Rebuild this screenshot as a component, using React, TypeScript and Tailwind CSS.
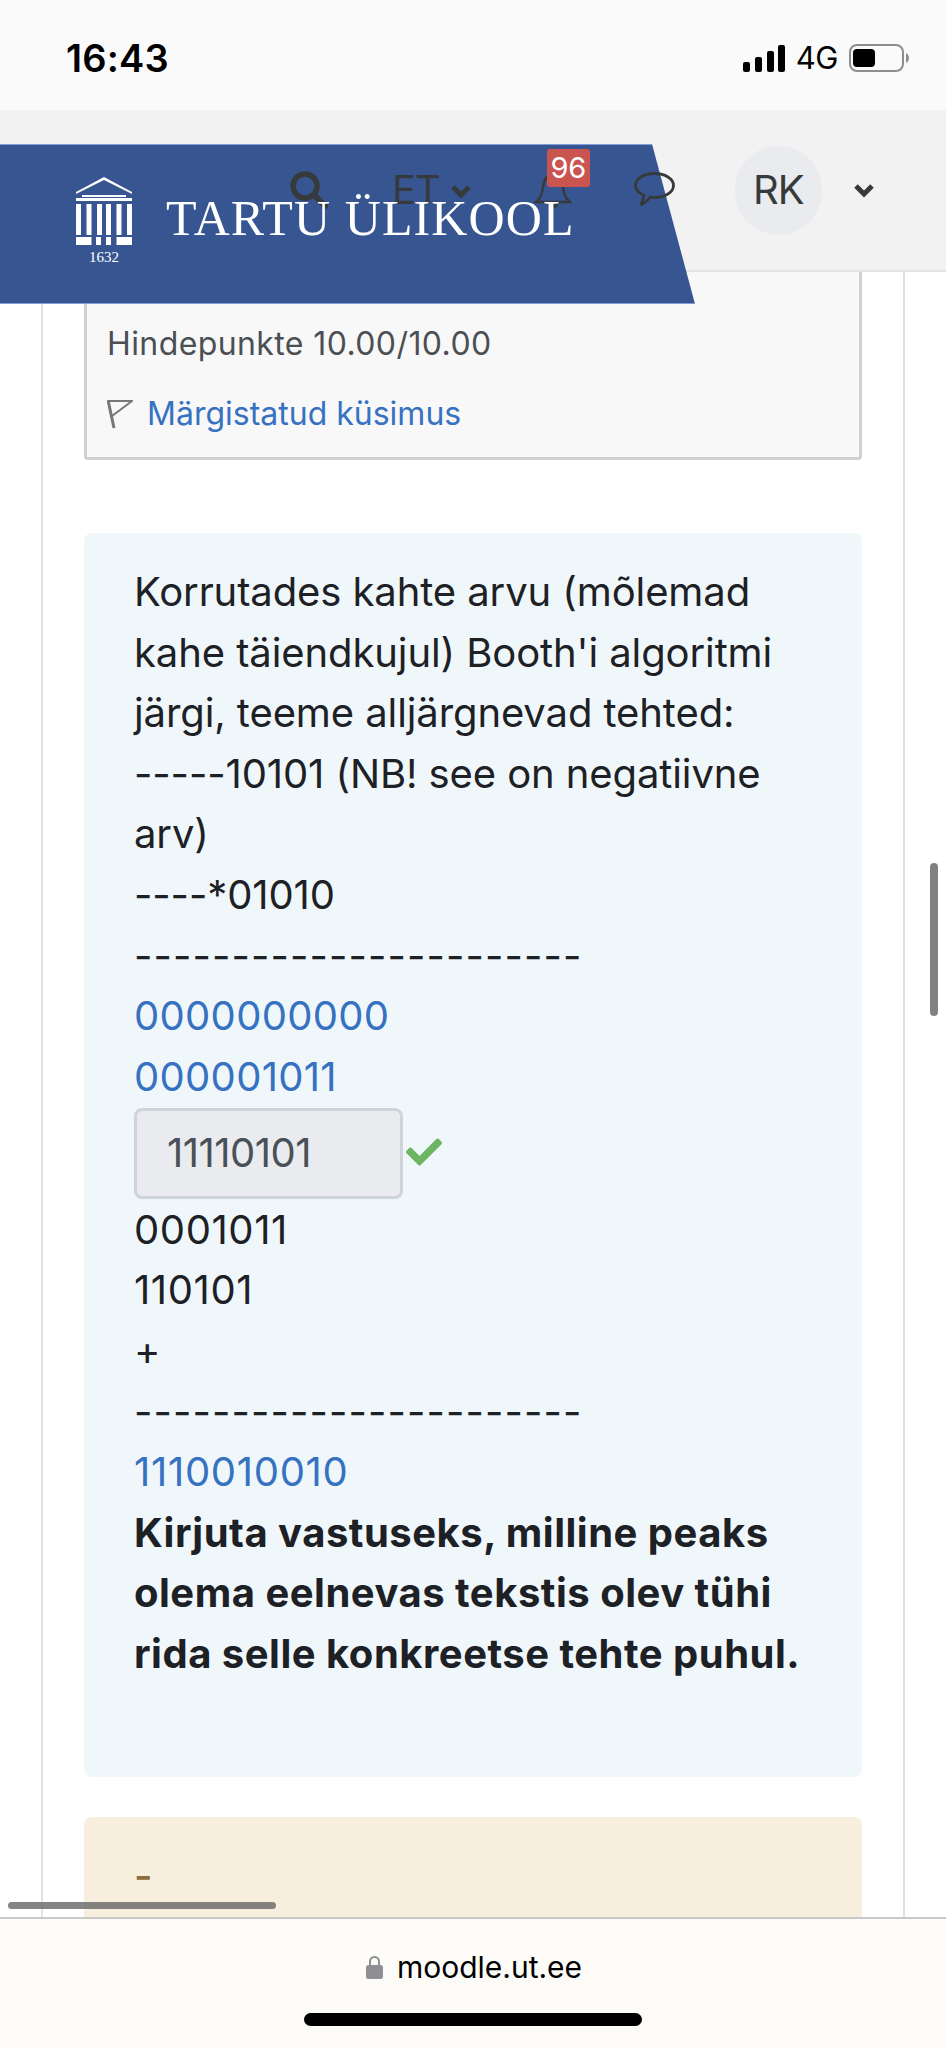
import React from "react";
import { FaCheck } from "react-icons/fa";

const topLines = [
  "Korrutades kahte arvu (mõlemad",
  "kahe täiendkujul) Booth'i algoritmi",
  "järgi, teeme alljärgnevad tehted:",
  "-----10101 (NB! see on negatiivne",
  "arv)",
  "----*01010",
];

const dashes = "-----------------------";

const boldLines = [
  "Kirjuta vastuseks, milline peaks",
  "olema eelnevas tekstis olev tühi",
  "rida selle konkreetse tehte puhul.",
];

const Line = ({ text, className = "" }: { text: string; className?: string }) => (
  <div className={`h-[60.6px] leading-[60.6px] whitespace-nowrap ${className}`}>{text}</div>
);

const Caret = ({ className = "" }: { className?: string }) => (
  <svg className={className} width="20" height="14" viewBox="0 0 20 14" fill="none" stroke="#373a3c" strokeWidth="5">
    <path d="M2 3l8 8 8-8" />
  </svg>
);

const StatusBar = () => (
  <div className="h-[110px] shrink-0 bg-[#fafafa] flex items-center pl-[66px] pt-[6px] text-black">
    <span className="text-[38px] font-semibold tracking-[0.2px]">16:43</span>
    <div className="ml-auto flex items-center mr-[37px]">
      <svg width="42" height="27" viewBox="0 0 42 27" fill="#000">
        <rect x="0" y="17" width="7" height="10" rx="2" />
        <rect x="12" y="12" width="7" height="15" rx="2" />
        <rect x="24" y="6" width="7" height="21" rx="2" />
        <rect x="35" y="0" width="7" height="27" rx="2" />
      </svg>
      <span className="ml-[11px] text-[31px] tracking-[-0.5px]">4G</span>
      <svg className="ml-[11px]" width="60" height="28" viewBox="0 0 60 28">
        <rect x="1" y="1" width="53" height="26" rx="7" fill="none" stroke="#8e8e8e" strokeWidth="2" />
        <rect x="4" y="5" width="22" height="18" rx="4" fill="#000" />
        <path d="M57 9c2 1 3 3 3 5s-1 4-3 5z" fill="#8e8e8e" />
      </svg>
    </div>
  </div>
);

const Logo = () => (
  <div className="absolute z-20 left-[76px] top-[177px] flex items-start">
    <div className="flex flex-col items-center w-[56px]">
      <svg width="56" height="68" viewBox="0 0 56 68" fill="#fff">
        <path d="M0 15 28 0l28 15v2L28 3 0 17z" />
        <path d="M6 18h44v2H6z" />
        <path d="M0 21h56v3H0z" />
        <path d="M0 27h5v31H0zM10.500 27h5v31h-5zM21 27h5v31h-5zM30 27h5v31h-5zM40.500 27h5v31h-5zM51 27h5v31h-5z" />
        <path d="M0 60h15.500v8H0zM20 60h5v8h-5zM30 60h5v8h-5zM40.500 60H56v8H40.500z" />
      </svg>
      <span className="mt-[3px] text-[15px] leading-[18px] text-white font-['Liberation_Serif',serif]">1632</span>
    </div>
    <span className="ml-[34px] mt-[16px] text-[50px] leading-[50px] text-white whitespace-nowrap tracking-[1.1px] font-['Liberation_Serif',serif]">
      TARTU ÜLIKOOL
    </span>
  </div>
);

const NavBar = () => (
  <div className="relative z-10 h-[162px] shrink-0 bg-[#f2f2f3] border-b-2 border-[#e4e4e4]">
    <div className="absolute z-0 left-0 top-[34px] w-[696px] h-[160px] bg-[#375591] border-y border-[#7f9ed6] [clip-path:polygon(0_0,652px_0,695px_100%,0_100%)]" />
    <div className="relative z-10 h-full flex items-center pl-[290px] text-[#373a3c]">
      <svg width="39" height="38" viewBox="0 0 39 38" fill="none" stroke="#373a3c">
        <circle cx="15" cy="15" r="12" strokeWidth="5.500" />
        <path d="M24 24l11 11" strokeWidth="6" strokeLinecap="round" />
      </svg>
      <span className="ml-[63px] text-[40px] tracking-[-1px]">ET</span>
      <Caret className="ml-[11px] mt-[2px]" />
      <div className="relative ml-[63px] w-[38px] h-[38px]">
        <svg width="38" height="38" viewBox="0 0 38 38" fill="none" stroke="#373a3c" strokeWidth="2.500">
          <path d="M2 31c5-4 6-8 7-15 1-8 5-12 10-12s9 4 10 12c1 7 2 11 7 15z" />
          <path d="M15 33c1 4 7 4 8 0" fill="#373a3c" />
        </svg>
        <span className="absolute left-[13px] top-[-22px] w-[43px] h-[38px] rounded-[3px] bg-[#ca5450] text-white text-[29px] leading-[38px] text-center">
          96
        </span>
      </div>
      <svg className="ml-[62px]" width="41" height="36" viewBox="0 0 41 36" fill="none" stroke="#373a3c" strokeWidth="2.800">
        <path d="M20.500 1.500c10.500 0 19 5.200 19 12s-8.500 12-19 12c-1.500 0-3-.1-4.400-.3-2.500 3.800-6 6-9.600 7.800 1.800-2.600 3-5.500 3.300-9.700C4.600 21 1.500 17.500 1.500 13.500c0-6.800 8.500-12 19-12z" />
      </svg>
      <div className="ml-[60px] w-[87px] h-[89px] rounded-full bg-[#e9ebef] flex items-center justify-center text-[40px] tracking-[-1px]">
        RK
      </div>
      <Caret className="ml-[32px]" />
    </div>
    <div className="absolute inset-0 -top-[110px]">
      <Logo />
    </div>
  </div>
);

const Content = () => (
  <div className="relative flex-1 min-h-0 overflow-hidden bg-white">
    <div className="ml-[41px] w-[864px] h-full border-x-2 border-[#dee2e6] px-[41px]">
      <div className="h-[188px] bg-[#f8f8f9] border-x-[3px] border-b-[3px] border-[#cfd0d2] rounded-b-[4px] pl-[20px] text-[32px] text-[#4b4f54]">
        <div className="pt-[52px] leading-[40px] tracking-[0.4px]">Hindepunkte 10.00/10.00</div>
        <div className="mt-[30px] flex items-center leading-[40px]">
          <svg width="26" height="30" viewBox="0 0 26 30" fill="none" stroke="#777" strokeWidth="2">
            <path d="M1 1l6 28" strokeWidth="3" />
            <path d="M2 2h23L5 17" />
          </svg>
          <span className="ml-[14px] text-[#3771c2]">Märgistatud küsimus</span>
        </div>
      </div>

      <div className="mt-[73px] h-[1244px] bg-[#f0f7fb] rounded-[8px] pl-[50px] pt-[29px] text-[40px] text-[#1d2125] tracking-[-0.1px]">
        {topLines.map((l, i) => (
          <Line key={i} text={l} />
        ))}
        <Line text={dashes} className="tracking-[1.1px]" />
        <Line text="0000000000" className="text-[#3771c2] tracking-[0.3px]" />
        <Line text="000001011" className="text-[#3771c2] tracking-[0.3px]" />
        <div className="h-[92.500px] flex items-center">
          <div className="w-[269px] h-[91px] bg-[#e9ebef] border-[3px] border-[#ced4da] rounded-[8px] pl-[30px] leading-[83px] tracking-[-0.500px] text-[#495057]">
            11110101
          </div>
          <FaCheck size={36} color="#6cb563" className="ml-[3px] -mt-[3px]" />
        </div>
        <Line text="0001011" className="tracking-[0.6px]" />
        <Line text="110101" className="tracking-[0.6px]" />
        <Line text="+" />
        <Line text={dashes} className="tracking-[1.1px]" />
        <Line text="1110010010" className="text-[#3771c2] tracking-[0.7px]" />
        {boldLines.map((l, i) => (
          <Line key={i} text={l} className="font-bold tracking-[0.5px]" />
        ))}
      </div>

      <div className="mt-[40px] h-[200px] bg-[#f8eedd] rounded-[8px] pl-[50px] pt-[29px] text-[40px] leading-[60px] font-medium text-[#8a6d3b]">
        -
      </div>
    </div>

    <div className="absolute left-[930px] top-[591px] w-[8px] h-[153px] rounded-full bg-[#808080]" />
    <div className="absolute left-[8px] bottom-[8px] w-[268px] h-[7px] rounded-full bg-[#6e6e6e]/85" />
  </div>
);

const BottomBar = () => (
  <div className="h-[131px] shrink-0 bg-[#fcfbf8] border-t-2 border-[#c9c9c9] flex flex-col items-center">
    <div className="mt-[30px] flex items-center text-black pl-[2px]">
      <svg width="17" height="24" viewBox="0 0 17 24">
        <path d="M4 11V6.500a4.500 4.500 0 0 1 9 0V11" fill="none" stroke="#8e8e93" strokeWidth="2" />
        <rect x="0" y="10" width="17" height="14" rx="2.500" fill="#8e8e93" />
      </svg>
      <span className="ml-[14px] text-[30px] leading-[36px]">moodle.ut.ee</span>
    </div>
    <div className="mt-[28px] w-[338px] h-[13px] rounded-full bg-black" />
  </div>
);

export default function App() {
  return (
    <div className="w-[946px] h-[2048px] overflow-hidden flex flex-col bg-white font-['Inter',sans-serif]">
      <StatusBar />
      <NavBar />
      <Content />
      <BottomBar />
    </div>
  );
}
